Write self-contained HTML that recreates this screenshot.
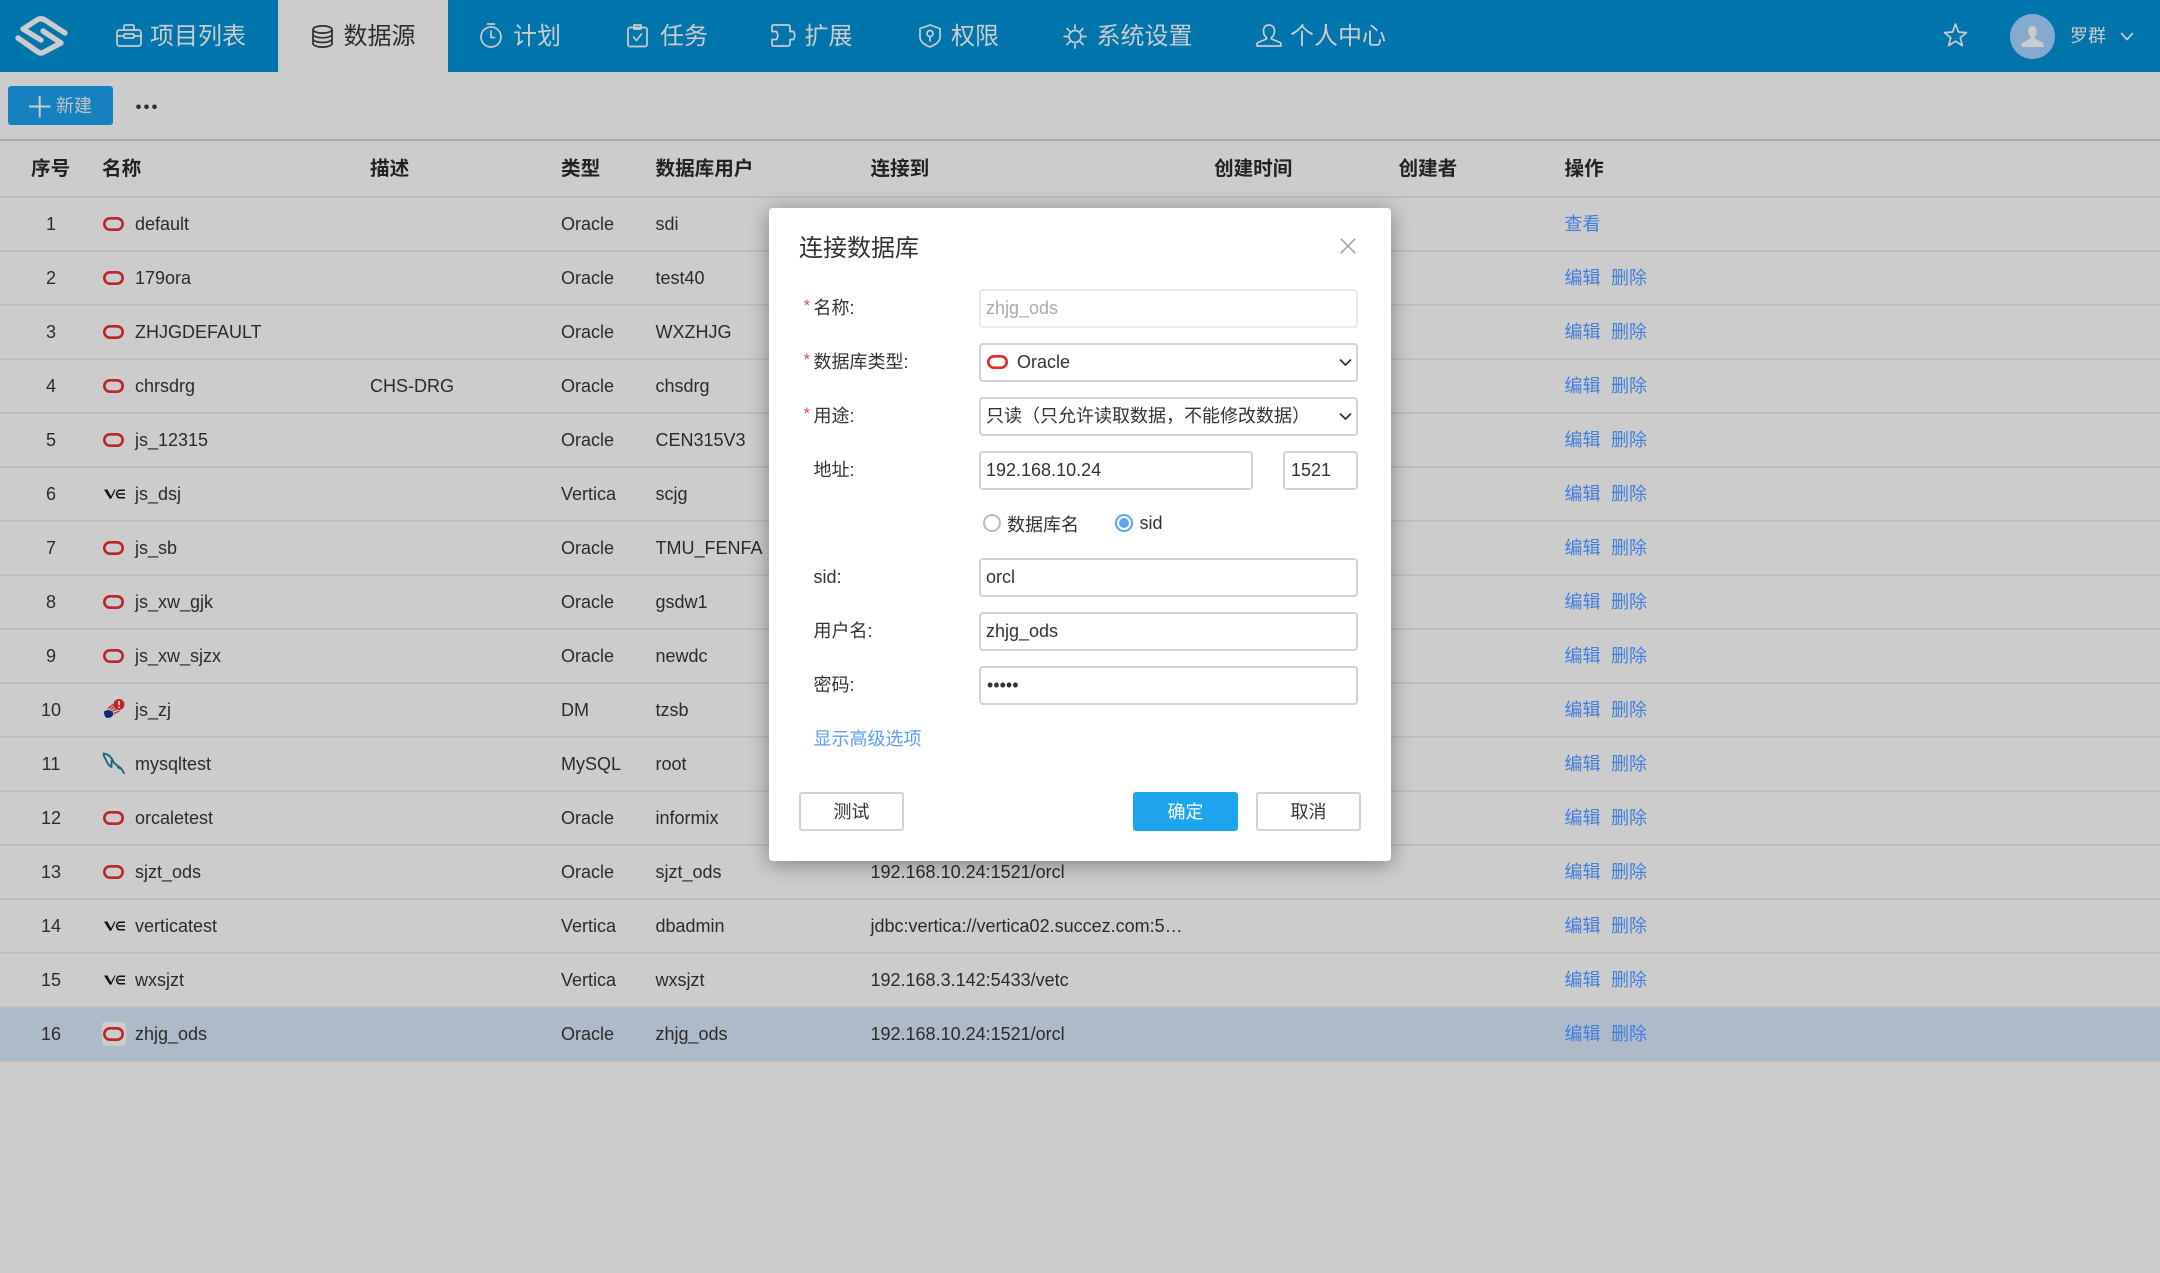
<!DOCTYPE html>
<html lang="zh"><head><meta charset="utf-8"><title>数据源</title>
<style>
html,body{margin:0;padding:0;width:2160px;height:1273px;overflow:hidden;background:#ccc}
body{position:relative;font-family:"Liberation Sans","Noto Sans CJK SC",sans-serif;font-size:18px;color:#2b2b2b}
.a,.a *{box-sizing:border-box}
.a{position:absolute;white-space:nowrap}
.n{position:absolute;top:0;height:73px;line-height:73px;font-size:24px;color:#ccc;white-space:nowrap}
svg{position:absolute;overflow:visible;display:block}
.s{fill:none;stroke:#ccc;stroke-width:1.7;stroke-linecap:round;stroke-linejoin:round}
.h{position:absolute;top:142px;height:55px;line-height:55px;font-size:19.6px;font-weight:bold;color:#222;white-space:nowrap}
.r{position:absolute;left:0;width:2160px;height:54px;border-bottom:2px solid #bdbdbd;box-sizing:border-box}
.r span{position:absolute;top:0;height:52px;line-height:52px;white-space:nowrap}
.r .i{left:0;width:102px;text-align:center}
.r .m{left:135px}
.r .d{left:370px}
.r .t{left:561px}
.r .u{left:655.5px}
.r .c{left:870.5px}
.r .e{left:1564.5px;color:#3f7ee0}
.r .x{left:1611px;color:#3f7ee0}
.r svg{left:103px;top:19px}
.lb{position:absolute;left:813.5px;height:39px;line-height:38px;color:#333;white-space:nowrap}
.st{position:absolute;left:803.5px;height:16px;line-height:22px;color:#f5484d;font-size:17px}
.f{position:absolute;height:39px;line-height:35px;border:2px solid #d2d2d2;border-radius:4px;background:#fff;color:#333;padding-left:5px;white-space:nowrap;box-sizing:border-box}
.b{position:absolute;top:792px;height:39px;line-height:36px;width:105px;border:2px solid #d2d2d2;border-radius:3px;background:#fff;color:#333;text-align:center;box-sizing:border-box}
</style></head>
<body>
<svg width="0" height="0" style="position:absolute">
<defs>
<symbol id="o" viewBox="0 0 21 14"><rect x="1.3" y="1.3" width="18.4" height="11.4" rx="5.7" fill="none" stroke="#bb2429" stroke-width="2.6"/></symbol>
<symbol id="v" viewBox="0 0 22 14"><path d="M1 2.500h3.400L8 9.300 11.500 2.500h1.200L8.200 11.800H6.800z" fill="#111"/><path d="M22 3.200H16.500Q14.500 3.200 13.500 7 14.500 10.800 16.500 10.800H22M15 7H22" stroke="#111" stroke-width="1.500" fill="none"/></symbol>
</defs>
</svg>

<!-- header -->
<div class="a" style="left:0;top:0;width:2160px;height:72px;background:#0075ac"></div>
<div class="a" style="left:278px;top:0;width:170px;height:72px;background:#ccc"></div>
<svg style="left:0;top:0" width="80" height="72" fill="none" stroke="#ccc" stroke-width="5.4" stroke-linecap="round" stroke-linejoin="round"><path d="M65 33 45 20Q41 17.500 37 20L23 29 41 40"/><path d="M18 38 38 52Q41 54 44 52L61 43 43 31"/></svg>

<svg class="s" style="left:116px;top:24px" width="26" height="23"><rect x="1" y="6" width="24" height="16" rx="2.500"/><path d="M8 6V2.500Q8 1 9.500 1h7Q18 1 18 2.500V6M1 12h6M19 12h6"/><rect x="8" y="10" width="10" height="4" rx="1"/></svg>
<div class="n" style="left:150px">项目列表</div>

<svg style="left:312px;top:25px" width="21" height="23" fill="none" stroke="#2e2e2e" stroke-width="1.700"><ellipse cx="10.500" cy="4.500" rx="9.500" ry="3.600"/><path d="M1 4.500v14c0 2 4.300 3.600 9.500 3.600s9.500-1.600 9.500-3.600v-14M1 9.200c0 2 4.300 3.600 9.500 3.600s9.500-1.600 9.500-3.600M1 13.900c0 2 4.300 3.600 9.500 3.600s9.500-1.600 9.500-3.600"/></svg>
<div class="n" style="left:343.500px;color:#2e2e2e">数据源</div>

<svg class="s" style="left:480px;top:23px" width="22" height="25"><circle cx="11" cy="14" r="10"/><path d="M7.500 1h7M11 8v6.500l3.500 0"/></svg>
<div class="n" style="left:513px">计划</div>

<svg class="s" style="left:627px;top:24px" width="21" height="23"><rect x="1" y="3.500" width="19" height="19" rx="2"/><path d="M7 1h7v4H7zM6.500 13l3 3.500 5-6.500"/></svg>
<div class="n" style="left:660px">任务</div>

<svg class="s" style="left:771px;top:24px" width="26" height="23"><path d="M2.500 1H17Q19 1 19 3V7.500H22.500Q25 11.500 22.500 15.500H19V20Q19 22 17 22H2.500Q1 22 1 20.500V15.500H5.500Q8 11.500 5.500 7.500H1V2.500Q1 1 2.500 1z"/></svg>
<div class="n" style="left:804.500px">扩展</div>

<svg class="s" style="left:919px;top:24px" width="22" height="24"><path d="M11 1 21 4.500V13Q21 19 11 23 1 19 1 13V4.500z"/><circle cx="11" cy="9.500" r="3"/><path d="M11 12.500V17"/></svg>
<div class="n" style="left:951px">权限</div>

<svg class="s" style="left:1063px;top:23.500px" width="24" height="25"><circle cx="12" cy="12.500" r="6"/><path d="M12 1v3.500M12 20.500V24M1 12.500h3.500M19.500 12.500H23M4 4.500l2.800 2.800M17.200 17.700l2.800 2.800M20 4.500l-2.800 2.800M6.800 17.700 4 20.500"/></svg>
<div class="n" style="left:1096.500px">系统设置</div>

<svg class="s" style="left:1256px;top:24px" width="26" height="23"><path d="M13 1c-3.500 0-5.500 2.500-5.500 6 0 3 1.500 5.500 3 6.500V15L2 18.500Q1 19 1 20.500V22H25V20.500Q25 19 24 18.500L15.500 15V13.500c1.500-1 3-3.500 3-6.500 0-3.500-2-6-5.500-6z"/></svg>
<div class="n" style="left:1290px">个人中心</div>

<svg class="s" style="left:1944px;top:23px" width="24" height="24"><path d="M11.500 1 14.400 9 22.500 9.600 16.300 14.700 18.300 22.500 11.500 18.200 4.700 22.500 6.700 14.700 .5 9.600 8.600 9z"/></svg>
<div class="a" style="left:2010px;top:14px;width:45px;height:45px;border-radius:50%;background:#84abcd"></div>
<svg style="left:2021px;top:25px" width="23" height="23" fill="#ccc"><path d="M11.500 1c-2.800 0-4.300 2.200-4.300 5 0 2.400 1 4.500 2.300 5.500v2L1.500 17.500Q.5 18 .5 19.500V22h22V19.500Q22.500 18 21.500 17.500L13.500 13.500v-2c1.300-1 2.300-3.100 2.300-5.500 0-2.800-1.500-5-4.300-5z"/></svg>
<div class="n" style="left:2070px;font-size:18px">罗群</div>
<svg class="s" style="left:2120px;top:32px" width="14" height="9"><path d="M1.500 1.500 7 7.500 12.500 1.500"/></svg>

<!-- toolbar -->
<div class="a" style="left:8px;top:86px;width:105px;height:39px;background:#1681bf;border-radius:3px"></div>
<svg style="left:29px;top:96px" width="22" height="22"><path d="M0 10.500h21.500M10.700 0v21.500" stroke="#ccc" stroke-width="2"/></svg>
<div class="a" style="left:56px;top:86px;height:41px;line-height:41px;font-size:18px;color:#c4c4c4">新建</div>
<svg style="left:136px;top:104px" width="22" height="6" fill="#2b2b2b"><circle cx="2.500" cy="2.800" r="2.300"/><circle cx="10.500" cy="2.800" r="2.300"/><circle cx="18.500" cy="2.800" r="2.300"/></svg>

<!-- table -->
<div class="a" style="left:0;top:139px;width:2160px;height:2px;background:#a9a9a9"></div>
<div class="h" style="left:31px">序号</div>
<div class="h" style="left:102px">名称</div>
<div class="h" style="left:370px">描述</div>
<div class="h" style="left:561px">类型</div>
<div class="h" style="left:655.500px">数据库用户</div>
<div class="h" style="left:870.500px">连接到</div>
<div class="h" style="left:1214px">创建时间</div>
<div class="h" style="left:1398.500px">创建者</div>
<div class="h" style="left:1564.500px">操作</div>
<div class="a" style="left:0;top:196px;width:2160px;height:2px;background:#bdbdbd"></div>

<div class="r" style="top:198px"><span class="i">1</span><svg width="21" height="14"><use href="#o"/></svg><span class="m">default</span><span class="t">Oracle</span><span class="u">sdi</span><span class="e">查看</span></div>
<div class="r" style="top:252px"><span class="i">2</span><svg width="21" height="14"><use href="#o"/></svg><span class="m">179ora</span><span class="t">Oracle</span><span class="u">test40</span><span class="e">编辑</span><span class="x">删除</span></div>
<div class="r" style="top:306px"><span class="i">3</span><svg width="21" height="14"><use href="#o"/></svg><span class="m">ZHJGDEFAULT</span><span class="t">Oracle</span><span class="u">WXZHJG</span><span class="e">编辑</span><span class="x">删除</span></div>
<div class="r" style="top:360px"><span class="i">4</span><svg width="21" height="14"><use href="#o"/></svg><span class="m">chrsdrg</span><span class="d">CHS-DRG</span><span class="t">Oracle</span><span class="u">chsdrg</span><span class="e">编辑</span><span class="x">删除</span></div>
<div class="r" style="top:414px"><span class="i">5</span><svg width="21" height="14"><use href="#o"/></svg><span class="m">js_12315</span><span class="t">Oracle</span><span class="u">CEN315V3</span><span class="e">编辑</span><span class="x">删除</span></div>
<div class="r" style="top:468px"><span class="i">6</span><svg width="22" height="14"><use href="#v"/></svg><span class="m">js_dsj</span><span class="t">Vertica</span><span class="u">scjg</span><span class="e">编辑</span><span class="x">删除</span></div>
<div class="r" style="top:522px"><span class="i">7</span><svg width="21" height="14"><use href="#o"/></svg><span class="m">js_sb</span><span class="t">Oracle</span><span class="u">TMU_FENFA</span><span class="e">编辑</span><span class="x">删除</span></div>
<div class="r" style="top:576px"><span class="i">8</span><svg width="21" height="14"><use href="#o"/></svg><span class="m">js_xw_gjk</span><span class="t">Oracle</span><span class="u">gsdw1</span><span class="e">编辑</span><span class="x">删除</span></div>
<div class="r" style="top:630px"><span class="i">9</span><svg width="21" height="14"><use href="#o"/></svg><span class="m">js_xw_sjzx</span><span class="t">Oracle</span><span class="u">newdc</span><span class="e">编辑</span><span class="x">删除</span></div>
<div class="r" style="top:684px"><span class="i">10</span><svg style="top:14px" width="22" height="22"><path d="M1 13.500Q5 10.500 9.500 13.500L10.500 16.500Q8.500 20 5 20 1 20 1 13.500z" fill="#14286e"/><path d="M5 10.500 11 6M7.500 11.500 13 7.500M9.500 13 15 10M11 15.500 16.500 13" stroke="#b8454a" stroke-width="1.700" fill="none"/><circle cx="16" cy="6.500" r="5.500" fill="#c22327"/><path d="M16 3v4.300M16 8.600v1.400" stroke="#ddd" stroke-width="1.700"/></svg><span class="m">js_zj</span><span class="t">DM</span><span class="u">tzsb</span><span class="e">编辑</span><span class="x">删除</span></div>
<div class="r" style="top:738px"><span class="i">11</span><svg style="top:15px" width="22" height="21" fill="none" stroke="#1d6a80" stroke-width="1.900" stroke-linecap="round" stroke-linejoin="round"><path d="M.5 .5C5 1 8.500 4 10.500 9 12.500 12.500 16.500 13 18.500 16L21 20M.5 .5C.5 4 3 6 4 9 5 12 7 13 8.500 14L8.500 8M18.500 16 15 14.500"/></svg><span class="m">mysqltest</span><span class="t">MySQL</span><span class="u">root</span><span class="e">编辑</span><span class="x">删除</span></div>
<div class="r" style="top:792px"><span class="i">12</span><svg width="21" height="14"><use href="#o"/></svg><span class="m">orcaletest</span><span class="t">Oracle</span><span class="u">informix</span><span class="e">编辑</span><span class="x">删除</span></div>
<div class="r" style="top:846px"><span class="i">13</span><svg width="21" height="14"><use href="#o"/></svg><span class="m">sjzt_ods</span><span class="t">Oracle</span><span class="u">sjzt_ods</span><span class="c">192.168.10.24:1521/orcl</span><span class="e">编辑</span><span class="x">删除</span></div>
<div class="r" style="top:900px"><span class="i">14</span><svg width="22" height="14"><use href="#v"/></svg><span class="m">verticatest</span><span class="t">Vertica</span><span class="u">dbadmin</span><span class="c">jdbc:vertica://vertica02.succez.com:5…</span><span class="e">编辑</span><span class="x">删除</span></div>
<div class="r" style="top:954px"><span class="i">15</span><svg width="22" height="14"><use href="#v"/></svg><span class="m">wxsjzt</span><span class="t">Vertica</span><span class="u">wxsjzt</span><span class="c">192.168.3.142:5433/vetc</span><span class="e">编辑</span><span class="x">删除</span></div>
<div class="r" style="top:1008px;background:#adbaca"><div class="a" style="left:102px;top:14px;width:24px;height:24px;background:#ccc;border-radius:3px"></div><span class="i">16</span><svg width="21" height="14"><use href="#o"/></svg><span class="m">zhjg_ods</span><span class="t">Oracle</span><span class="u">zhjg_ods</span><span class="c">192.168.10.24:1521/orcl</span><span class="e">编辑</span><span class="x">删除</span></div>

<!-- dialog -->
<div class="a" style="left:769px;top:208px;width:622px;height:653px;background:#fff;border-radius:4px;box-shadow:0 3px 20px rgba(0,0,0,.38)"></div>
<div class="a" style="left:799px;top:231px;height:36px;line-height:36px;font-size:24px;color:#333">连接数据库</div>
<svg style="left:1340px;top:238px" width="16" height="16"><path d="M.8.8 15.2 15.2M15.2.8.8 15.2" stroke="#a6a6a6" stroke-width="1.7"/></svg>

<div class="st" style="top:295px">*</div><div class="lb" style="top:289px">名称:</div>
<div class="f" style="left:979px;top:289px;width:379px;border-color:#e9e9e9;color:#aaa">zhjg_ods</div>

<div class="st" style="top:349px">*</div><div class="lb" style="top:343px">数据库类型:</div>
<div class="f" style="left:979px;top:343px;width:379px;padding-left:36px">Oracle</div>
<svg style="left:987px;top:355px" width="21" height="14"><rect x="1.3" y="1.3" width="18.4" height="11.4" rx="5.7" fill="none" stroke="#e8262c" stroke-width="2.6"/></svg>
<svg style="left:1339px;top:358px" width="13" height="9" fill="none" stroke="#333" stroke-width="1.8"><path d="M1 1.500 6.500 7 12 1.500"/></svg>

<div class="st" style="top:403px">*</div><div class="lb" style="top:397px">用途:</div>
<div class="f" style="left:979px;top:397px;width:379px">只读（只允许读取数据，不能修改数据）</div>
<svg style="left:1339px;top:412px" width="13" height="9" fill="none" stroke="#333" stroke-width="1.8"><path d="M1 1.500 6.500 7 12 1.500"/></svg>

<div class="lb" style="top:451px">地址:</div>
<div class="f" style="left:979px;top:451px;width:274px">192.168.10.24</div>
<div class="f" style="left:1283px;top:451px;width:75px;padding-left:6px">1521</div>

<div class="a" style="left:983px;top:514px;width:18px;height:18px;border:2px solid #bbb;border-radius:50%;background:#fff"></div>
<div class="a" style="left:1007px;top:507px;height:36px;line-height:36px;color:#333">数据库名</div>
<div class="a" style="left:1115px;top:514px;width:18px;height:18px;border:2px solid #5aa6f5;border-radius:50%;background:#fff"></div>
<div class="a" style="left:1119px;top:518px;width:10px;height:10px;border-radius:50%;background:#5aa6f5"></div>
<div class="a" style="left:1139.500px;top:505px;height:36px;line-height:36px;color:#333">sid</div>

<div class="lb" style="top:558px">sid:</div>
<div class="f" style="left:979px;top:558px;width:379px">orcl</div>
<div class="lb" style="top:612px">用户名:</div>
<div class="f" style="left:979px;top:612px;width:379px">zhjg_ods</div>
<div class="lb" style="top:666px">密码:</div>
<div class="f" style="left:979px;top:666px;width:379px;padding-left:6px">•••••</div>

<div class="a" style="left:813.500px;top:721px;height:36px;line-height:36px;color:#5a9ff5">显示高级选项</div>

<div class="b" style="left:799px">测试</div>
<div class="b" style="left:1133px;border-color:#1ca4ec;background:#1ca4ec;color:#fff">确定</div>
<div class="b" style="left:1256px">取消</div>
</body></html>
